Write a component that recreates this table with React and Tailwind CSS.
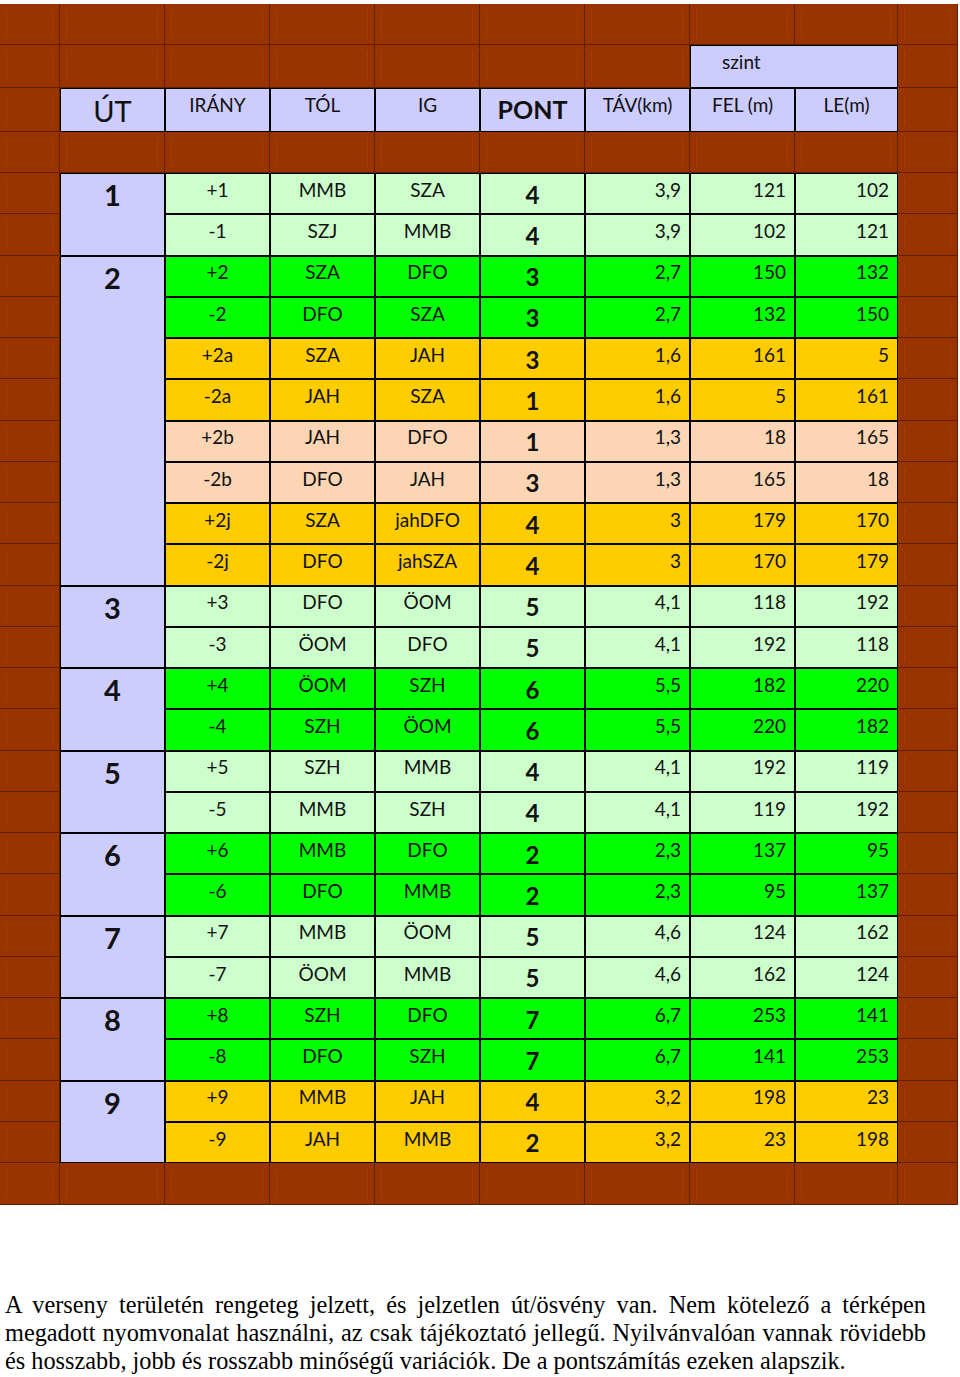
import React from "react";

const LAV = "bg-[#ccccff]";
const rowColors = {
    light: "bg-[#ccffcc]",
    green: "bg-[#00ff00]",
    gold: "bg-[#ffcc00]",
    peach: "bg-[#fcd5b4]",
};

// [irany, tol, ig, pont, tav, fel, le, color]
const groups = [
    { ut: "1", span: "row-span-2", rows: [
        ["+1", "MMB", "SZA", "4", "3,9", "121", "102", "light"],
        ["-1", "SZJ", "MMB", "4", "3,9", "102", "121", "light"],
    ] },
    { ut: "2", span: "row-span-8", rows: [
        ["+2", "SZA", "DFO", "3", "2,7", "150", "132", "green"],
        ["-2", "DFO", "SZA", "3", "2,7", "132", "150", "green"],
        ["+2a", "SZA", "JAH", "3", "1,6", "161", "5", "gold"],
        ["-2a", "JAH", "SZA", "1", "1,6", "5", "161", "gold"],
        ["+2b", "JAH", "DFO", "1", "1,3", "18", "165", "peach"],
        ["-2b", "DFO", "JAH", "3", "1,3", "165", "18", "peach"],
        ["+2j", "SZA", "jahDFO", "4", "3", "179", "170", "gold"],
        ["-2j", "DFO", "jahSZA", "4", "3", "170", "179", "gold"],
    ] },
    { ut: "3", span: "row-span-2", rows: [
        ["+3", "DFO", "ÖOM", "5", "4,1", "118", "192", "light"],
        ["-3", "ÖOM", "DFO", "5", "4,1", "192", "118", "light"],
    ] },
    { ut: "4", span: "row-span-2", rows: [
        ["+4", "ÖOM", "SZH", "6", "5,5", "182", "220", "green"],
        ["-4", "SZH", "ÖOM", "6", "5,5", "220", "182", "green"],
    ] },
    { ut: "5", span: "row-span-2", rows: [
        ["+5", "SZH", "MMB", "4", "4,1", "192", "119", "light"],
        ["-5", "MMB", "SZH", "4", "4,1", "119", "192", "light"],
    ] },
    { ut: "6", span: "row-span-2", rows: [
        ["+6", "MMB", "DFO", "2", "2,3", "137", "95", "green"],
        ["-6", "DFO", "MMB", "2", "2,3", "95", "137", "green"],
    ] },
    { ut: "7", span: "row-span-2", rows: [
        ["+7", "MMB", "ÖOM", "5", "4,6", "124", "162", "light"],
        ["-7", "ÖOM", "MMB", "5", "4,6", "162", "124", "light"],
    ] },
    { ut: "8", span: "row-span-2", rows: [
        ["+8", "SZH", "DFO", "7", "6,7", "253", "141", "green"],
        ["-8", "DFO", "SZH", "7", "6,7", "141", "253", "green"],
    ] },
    { ut: "9", span: "row-span-2", rows: [
        ["+9", "MMB", "JAH", "4", "3,2", "198", "23", "gold"],
        ["-9", "JAH", "MMB", "2", "3,2", "23", "198", "gold"],
    ] },
];

const Brick = () => (
    <div className="border-r border-b border-[#5e2000] bg-[#993300] p-[6px]">
        <div className="h-full border-x border-[#a23e0d]"></div>
    </div>
);

const Cell = ({ bg, className = "", children }) => (
    <div className={`border border-black ${bg} flex ${className}`}>{children}</div>
);

const brickRow = (key) => Array.from({ length: 10 }, (_, i) => <Brick key={`${key}-${i}`} />);

export default function App() {
    const cells = [];
    cells.push(...brickRow("top"));

    // szint row
    for (let i = 0; i < 7; i++) cells.push(<Brick key={`s-${i}`} />);
    cells.push(
        <Cell key="szint" bg={LAV} className="col-span-2 items-center pl-[31px] pb-[8px] text-[19px]">szint</Cell>
    );
    cells.push(<Brick key="s-9" />);

    // header row
    cells.push(<Brick key="h-0" />);
    cells.push(<Cell key="h-ut" bg={LAV} className="items-center justify-center text-[29px] pt-[2px]">ÚT</Cell>);
    ["IRÁNY", "TÓL", "IG"].forEach((t) =>
        cells.push(<Cell key={`h-${t}`} bg={LAV} className="items-center justify-center pb-[10px] text-[19px]">{t}</Cell>)
    );
    cells.push(<Cell key="h-pont" bg={LAV} className="items-center justify-center font-bold text-[25px]">PONT</Cell>);
    ["TÁV(km)", "FEL (m)", "LE(m)"].forEach((t) =>
        cells.push(<Cell key={`h-${t}`} bg={LAV} className="items-center justify-center pb-[10px] text-[19px]">{t}</Cell>)
    );
    cells.push(<Brick key="h-9" />);

    cells.push(...brickRow("gap"));

    groups.forEach((g) => {
        g.rows.forEach((r, idx) => {
            const bg = rowColors[r[7]];
            const k = r[0];
            cells.push(<Brick key={`${k}-l`} />);
            if (idx === 0) {
                cells.push(
                    <Cell key={`${k}-ut`} bg={LAV} className={`${g.span} justify-center pt-[3px] text-[29px] font-bold leading-[36px]`}>
                        {g.ut}
                    </Cell>
                );
            }
            [r[0], r[1], r[2]].forEach((t, j) =>
                cells.push(<Cell key={`${k}-${j}`} bg={bg} className="items-center justify-center pb-[7px] text-[19px]">{t}</Cell>)
            );
            cells.push(<Cell key={`${k}-p`} bg={bg} className="items-center justify-center pt-[2px] font-bold text-[24px]">{r[3]}</Cell>);
            [r[4], r[5], r[6]].forEach((t, j) =>
                cells.push(<Cell key={`${k}-n${j}`} bg={bg} className="items-center justify-end pr-[8px] pb-[7px] text-[19px]">{t}</Cell>)
            );
            cells.push(<Brick key={`${k}-r`} />);
        });
    });

    cells.push(...brickRow("bottom"));

    return (
        <div className="w-[960px] bg-white pt-[4px] pb-[2px]">
            <div className="w-[958px] grid grid-cols-[60px_105px_105px_105px_105px_105px_105px_105px_103px_60px] grid-rows-[41px_43px_44px_41px_repeat(24,41.25px)_42px] font-['Lato',sans-serif] text-[#111]">
                {cells}
            </div>
            <div className="mt-[86px] pl-[5px] w-[926px] text-[24.3px] leading-[28px] font-['Liberation_Serif',serif] text-black">
                <p className="text-justify [text-align-last:justify]">
                    A verseny területén rengeteg jelzett, és jelzetlen út/ösvény van. Nem kötelező a térképen
                </p>
                <p className="text-justify [text-align-last:justify]">
                    megadott nyomvonalat használni, az csak tájékoztató jellegű. Nyilvánvalóan vannak rövidebb
                </p>
                <p>és hosszabb, jobb és rosszabb minőségű variációk. De a pontszámítás ezeken alapszik.</p>
            </div>
        </div>
    );
}
